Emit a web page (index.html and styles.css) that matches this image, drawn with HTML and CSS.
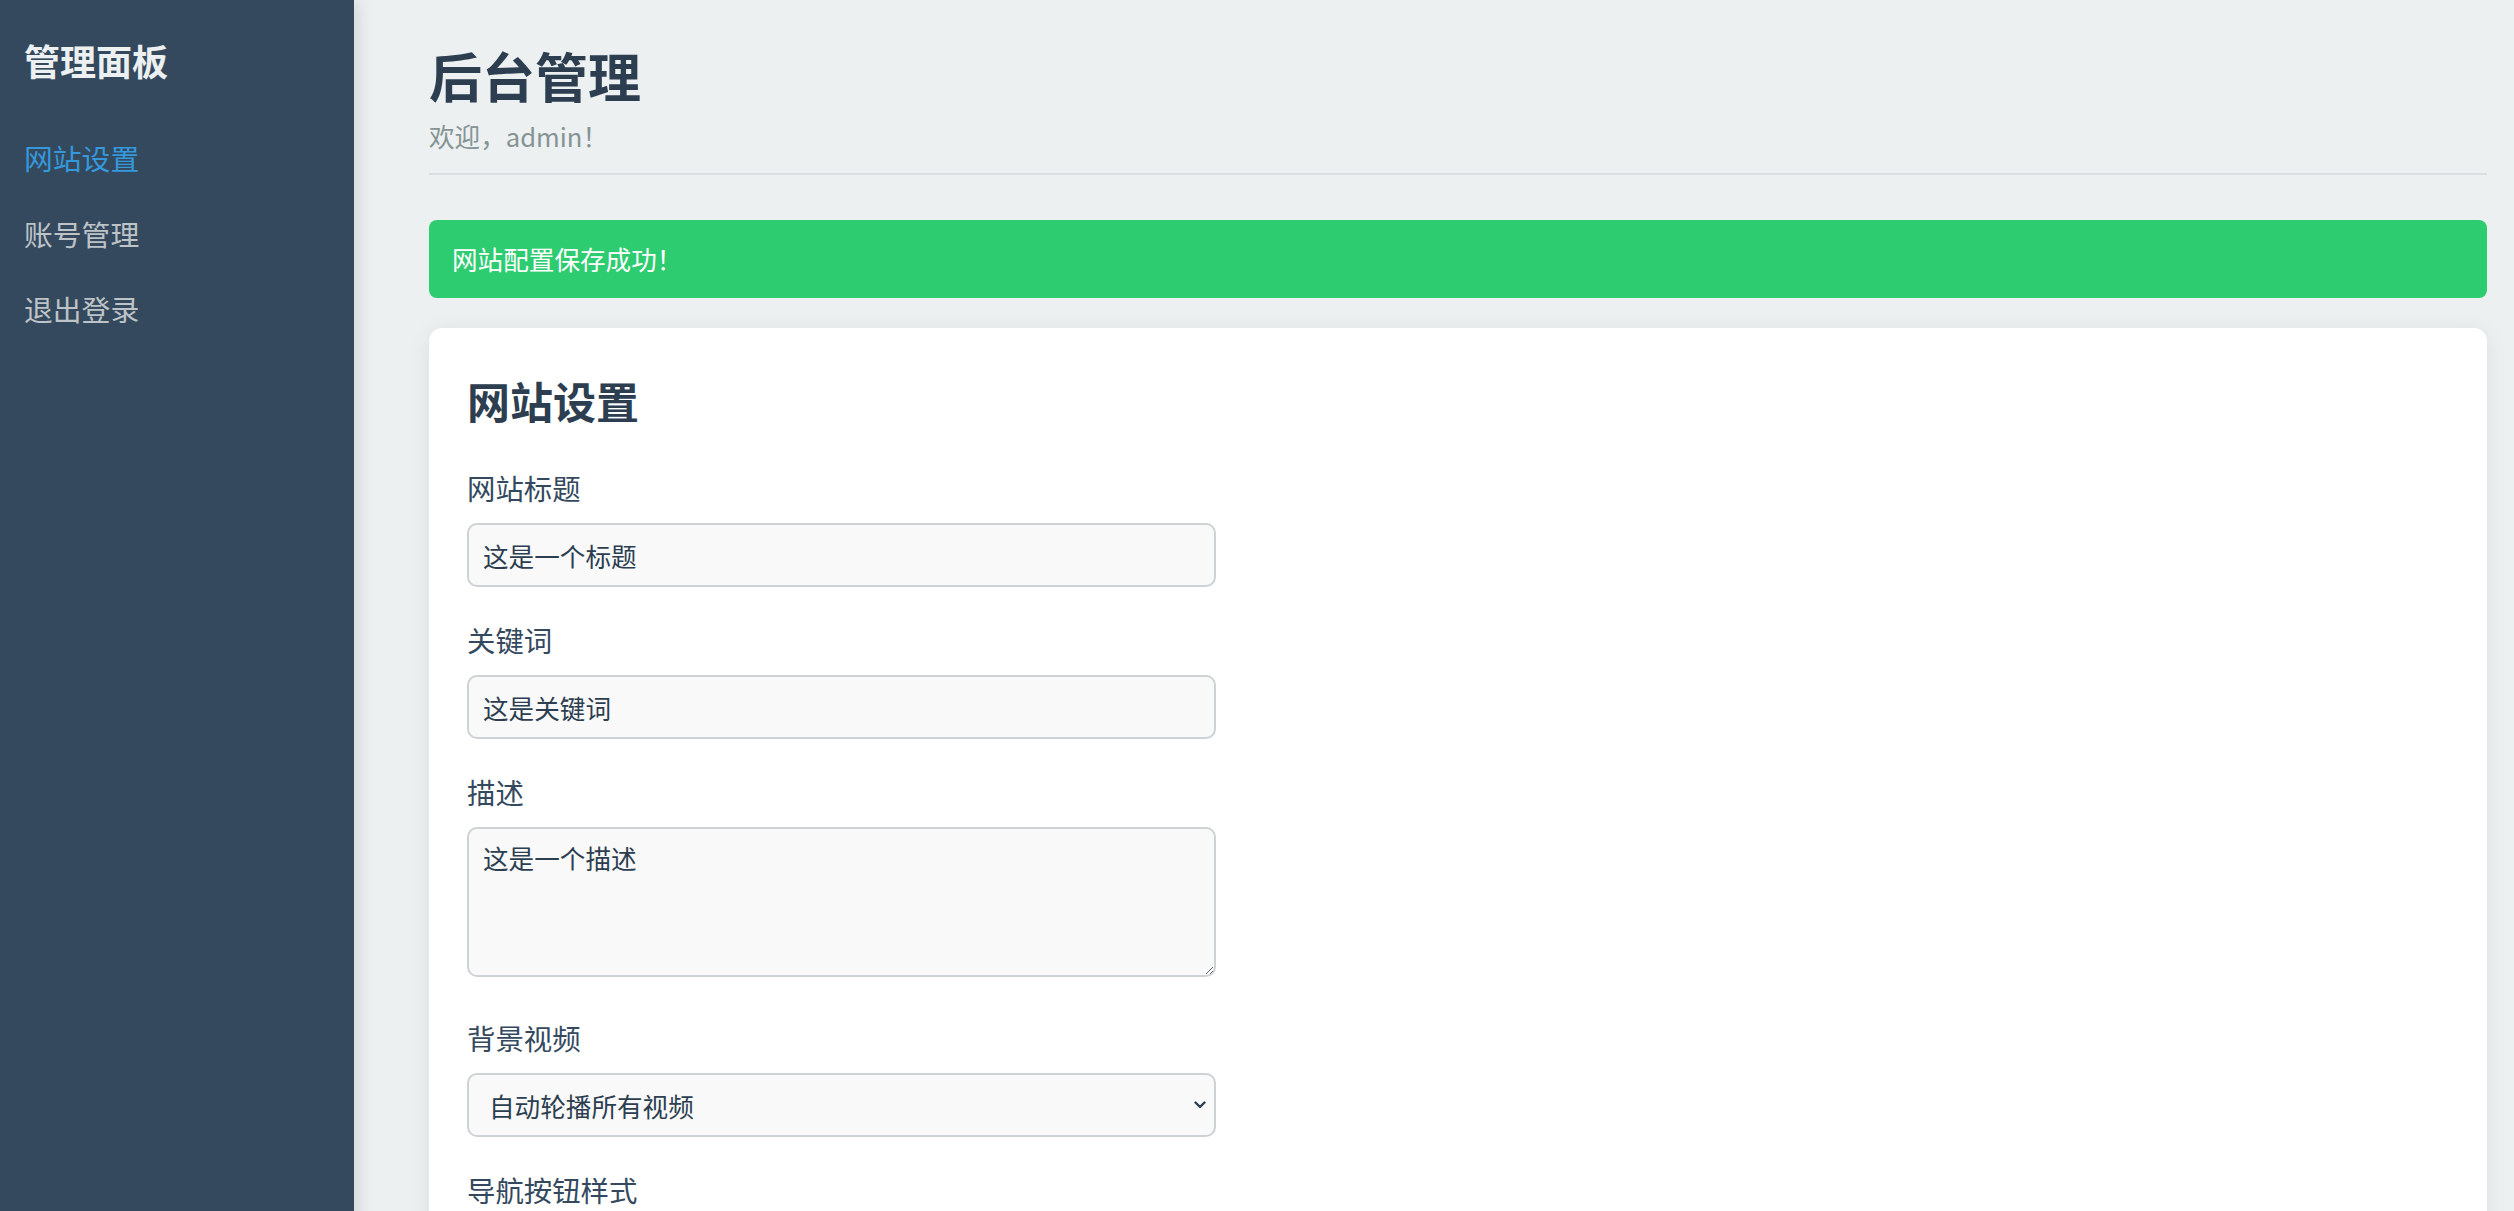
FILE: index.html
```html
<!DOCTYPE html>
<html lang="zh-CN">
<head>
    <meta charset="UTF-8">
    <meta name="viewport" content="width=device-width, initial-scale=1.0">
    <title>后台管理</title>
    <link rel="stylesheet" href="styles.css">
</head>
<body>
    <aside class="sidebar">
        <div class="sidebar-title">管理面板</div>
        <ul class="sidebar-nav">
            <li><a href="#" class="active">网站设置</a></li>
            <li><a href="#">账号管理</a></li>
            <li><a href="#">退出登录</a></li>
        </ul>
    </aside>

    <main class="main">
        <header class="page-header">
            <h1>后台管理</h1>
            <p>欢迎，admin！</p>
        </header>

        <div class="alert-success">网站配置保存成功！</div>

        <section class="card">
            <h2>网站设置</h2>
            <form>
                <div class="form-group">
                    <label for="site-title">网站标题</label>
                    <input type="text" id="site-title" value="这是一个标题">
                </div>
                <div class="form-group">
                    <label for="keywords">关键词</label>
                    <input type="text" id="keywords" value="这是关键词">
                </div>
                <div class="form-group form-group-tall">
                    <label for="description">描述</label>
                    <textarea id="description">这是一个描述</textarea>
                </div>
                <div class="form-group">
                    <label for="bg-video">背景视频</label>
                    <select id="bg-video">
                        <option>自动轮播所有视频</option>
                        <option>固定第一个视频</option>
                    </select>
                </div>
                <div class="form-group">
                    <label for="nav-style">导航按钮样式</label>
                    <select id="nav-style">
                        <option>默认样式</option>
                        <option>圆角样式</option>
                    </select>
                </div>
                <button type="submit" class="save-btn">保存设置</button>
            </form>
        </section>
    </main>
</body>
</html>
```

FILE: styles.css
```css
* {
    margin: 0;
    padding: 0;
    box-sizing: border-box;
}

body {
    font-family: "Noto Sans CJK SC", "Noto Sans", sans-serif;
    background: #ecf0f1;
    color: #2c3e50;
    display: flex;
    min-height: 100vh;
}

.sidebar {
    width: 354px;
    flex-shrink: 0;
    min-height: 100vh;
    background: #34495e;
    padding: 24px;
    box-shadow: 3px 0 18px rgba(0, 0, 0, 0.12);
    position: relative;
    z-index: 1;
}

.sidebar-title {
    margin-top: 15px;
    font-size: 36px;
    line-height: 43px;
    font-weight: 700;
    color: #ecf0f1;
}

.sidebar-nav {
    list-style: none;
    margin-top: 38px;
}

.sidebar-nav a {
    display: block;
    padding: 16px 0;
    font-size: 28.8px;
    line-height: 43.5px;
    color: #bdc3c7;
    text-decoration: none;
}

.sidebar-nav a.active {
    color: #3498db;
}

.main {
    flex: 1;
    padding: 44px 27px 40px 75px;
}

.page-header {
    padding-bottom: 18px;
    border-bottom: 2px solid #dcdfe1;
    margin-bottom: 45px;
}

.page-header h1 {
    font-size: 53px;
    line-height: 62px;
    font-weight: 700;
    color: #2c3e50;
}

.page-header p {
    margin-top: 11px;
    font-size: 25.6px;
    line-height: 38px;
    color: #869394;
}

.alert-success {
    background: #2ecc71;
    color: #fff;
    font-size: 25.6px;
    line-height: 30px;
    padding: 24px 23px;
    border-radius: 8px;
    margin-bottom: 30px;
}

.card {
    background: #fff;
    border-radius: 13px;
    padding: 40px 40px 40px 38px;
    box-shadow: 0 3px 22px rgba(0, 0, 0, 0.07);
}

.card h2 {
    font-size: 43px;
    line-height: 50px;
    font-weight: 700;
    color: #2c3e50;
    margin: 7px 0 42px;
}

.form-group {
    margin-bottom: 32px;
}

.form-group-tall {
    margin-bottom: 40px;
}

.form-group label {
    display: block;
    font-size: 28.4px;
    line-height: 42px;
    color: #34495e;
    margin-bottom: 14px;
}

.form-group input,
.form-group textarea,
.form-group select {
    display: block;
    width: 749px;
    font-family: inherit;
    font-size: 25.6px;
    color: #2c3e50;
    background-color: #f9f9f9;
    border: 2px solid #cdd2d6;
    border-radius: 10px;
}

.form-group input {
    height: 64px;
    padding: 0 14px;
}

.form-group select {
    height: 64px;
    padding: 0 40px 0 20px;
    appearance: none;
    background-image: url("data:image/svg+xml,%3Csvg xmlns='http://www.w3.org/2000/svg' width='12' height='8' viewBox='0 0 12 8'%3E%3Cpath d='M1.5 1.5 6 6l4.5-4.5' fill='none' stroke='%232c3e50' stroke-width='2.4' stroke-linecap='round' stroke-linejoin='round'/%3E%3C/svg%3E");
    background-repeat: no-repeat;
    background-position: right 8px center;
    background-size: 12px 8px;
}

.form-group textarea {
    height: 150px;
    padding: 10px 14px;
    line-height: 1.45;
}

.save-btn {
    background: #3498db;
    color: #fff;
    border: none;
    border-radius: 10px;
    padding: 16px 40px;
    font-family: inherit;
    font-size: 25.6px;
    cursor: pointer;
}
```
